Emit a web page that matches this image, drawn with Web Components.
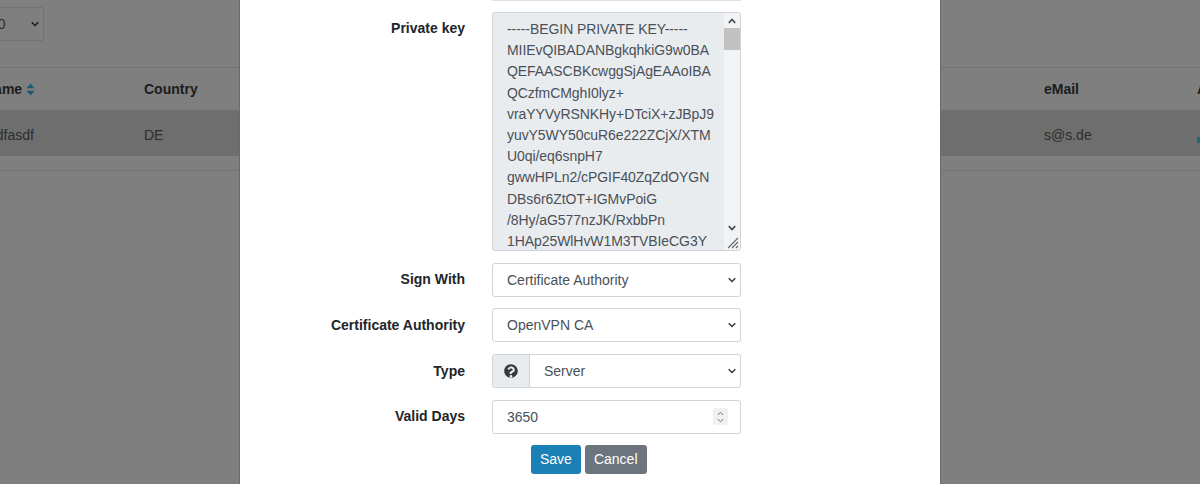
<!DOCTYPE html>
<html>
<head>
<meta charset="utf-8">
<title>Certificates</title>
<style>
  html, body { margin: 0; height: 484px; overflow: hidden; }
  body { font: 14px "Liberation Sans", Arial, sans-serif; color: #212529; position: relative; }
</style>
</head>
<body>
<cert-table>
  <cert-cell slot="head" style="--w:160px"><b>Name</b><sort-icon></sort-icon></cert-cell>
  <cert-cell slot="head" style="--w:900px"><b>Country</b></cert-cell>
  <cert-cell slot="head" style="--w:153px"><b>eMail</b></cert-cell>
  <cert-cell slot="head" style="--w:60px"><b>Action</b></cert-cell>
  <cert-cell slot="row" style="--w:163px;margin-left:-3px">asdfasdf</cert-cell>
  <cert-cell slot="row" style="--w:900px">DE</cert-cell>
  <cert-cell slot="row" style="--w:153px">s@s.de</cert-cell>
  <cert-cell slot="row" style="--w:60px"><i class="mark"></i></cert-cell>
</cert-table>
<cert-modal>
  <form-row label="Private key" top><key-area></key-area></form-row>
  <form-row label="Sign With"><form-select>Certificate Authority</form-select></form-row>
  <form-row label="Certificate Authority"><form-select>OpenVPN CA</form-select></form-row>
  <form-row label="Type"><form-select help>Server</form-select></form-row>
  <form-row label="Valid Days"><number-box>3650</number-box></form-row>
  <div slot="actions" style="display:flex;gap:4px">
    <form-btn kind="save">Save</form-btn>
    <form-btn kind="cancel">Cancel</form-btn>
  </div>
</cert-modal>
<script>
const CHEVRON = `<svg width="8" height="6" viewBox="0 0 8 6"><path d="M.7 1.2L4 4.5l3.3-3.3" fill="none" stroke="#343a40" stroke-width="1.5"/></svg>`

class CertCell extends HTMLElement {
  constructor() {
    super()
    this.attachShadow({ mode: 'open' }).innerHTML = `<style>
      :host { display: flex; align-items: center; gap: 4px; flex: 0 0 var(--w); min-width: 0; }
      ::slotted(.mark) { width: 6px; height: 6px; margin-top: 10px; background: #1f6a70; }
    </style><slot></slot>`
  }
}

class SortIcon extends HTMLElement {
  constructor() {
    super()
    this.attachShadow({ mode: 'open' }).innerHTML = `<style>
      :host { display: inline-flex; }
    </style><svg width="9" height="13" viewBox="0 0 9 13"><path d="M4.5 0.5L8.5 5.2H.5zM4.5 12.5L.5 7.8H8.5z" fill="#1d5a74"/></svg>`
  }
}

class CertTable extends HTMLElement {
  constructor() {
    super()
    this.attachShadow({ mode: 'open' }).innerHTML = `<style>
      :host { display: block; height: 484px; background: #7f7f7f; color: #1c1c1c; overflow: hidden; }
      .tools { height: 67px; box-sizing: border-box; padding-top: 7px; }
      .len { width: 66px; height: 34px; margin-left: -22px; box-sizing: border-box; border: 1px solid #737373; border-radius: 2px;
        display: flex; align-items: center; justify-content: space-between; padding: 0 4px 0 11px; color: #2d2d2d; }
      .head, .row { display: flex; margin-left: -16px; width: 1300px; align-items: center; box-sizing: border-box; }
      .head { height: 43px; border-top: 1px solid #737373; }
      .row { height: 46px; background: #6e6e6e; color: #2d2d2d; padding-top: 3px; }
      .gap { height: 14px; border-bottom: 1px solid #737373; }
      svg path { stroke: #1c1c1c; }
    </style>
    <div class="tools"><div class="len">10 ${CHEVRON}</div></div>
    <div class="head"><slot name="head"></slot></div>
    <div class="row"><slot name="row"></slot></div>
    <div class="gap"></div>`
  }
}

class CertModal extends HTMLElement {
  constructor() {
    super()
    this.attachShadow({ mode: 'open' }).innerHTML = `<style>
      :host { position: absolute; top: 0; left: 240px; width: 700px; height: 484px; background: #fff; overflow: hidden;
        box-sizing: border-box; display: flex; flex-direction: column; align-items: stretch; box-shadow: 0 0 0 1px #6a6a6a; }
      .cut { margin-left: 252px; width: 249px; height: 1px; background: #dee2e6; margin-bottom: 11px; }
      .rows { display: flex; flex-direction: column; gap: 11.7px; }
      .actions { display: flex; margin: 11px 0 0 291px; }
    </style>
    <div class="cut"></div>
    <div class="rows"><slot></slot></div>
    <div class="actions"><slot name="actions"></slot></div>`
  }
}

class FormRow extends HTMLElement {
  constructor() {
    super()
    this.attachShadow({ mode: 'open' }).innerHTML = `<style>
      :host { display: grid; grid-template-columns: 225px 249px; column-gap: 27px; align-items: center; }
      :host([top]) { align-items: start; }
      :host([top]) label { padding-top: 6px; }
      label { font-weight: 700; text-align: right; color: #212529; line-height: 21px; }
    </style><label></label><div><slot></slot></div>`
  }
  connectedCallback() {
    this.shadowRoot.querySelector('label').textContent = this.getAttribute('label')
  }
}

class FormSelect extends HTMLElement {
  constructor() {
    super()
    const help = this.hasAttribute('help')
    this.attachShadow({ mode: 'open' }).innerHTML = `<style>
      :host { display: flex; height: 34px; box-sizing: border-box; border: 1px solid #ced4da; border-radius: 3px; background: #fff; color: #495057; overflow: hidden; }
      .help { width: 36px; flex: none; background: #e9ecef; border-right: 1px solid #ced4da; display: flex; align-items: center; justify-content: center; }
      .val { flex: 1; display: flex; align-items: center; justify-content: space-between; padding: 0 4px 0 14px; }
    </style>
    ${help ? `<span class="help"><svg width="14" height="14" viewBox="0 0 512 512"><path fill="#343a40" d="M504 256c0 137-111 248-248 248S8 393 8 256C8 119 119 8 256 8s248 111 248 248zM263 90c-54 0-89 23-134 79-4 5-3 12 2 16l34 26c5 4 13 3 17-2 24-30 40-47 76-47 27 0 61 17 61 44 0 20-16 30-43 45-31 17-73 39-73 94v5c0 7 5 12 12 12h56c7 0 12-5 12-12v-1c0-38 110-39 110-141 0-77-80-123-153-123zM256 398c-29 0-52 23-52 52s23 52 52 52 52-23 52-52-23-52-52-52z"/></svg></span>` : ''}
    <div class="val"><span><slot></slot></span>${CHEVRON}</div>`
  }
}

class KeyArea extends HTMLElement {
  constructor() {
    super()
    const lines = ['-----BEGIN PRIVATE KEY-----', 'MIIEvQIBADANBgkqhkiG9w0BA', 'QEFAASCBKcwggSjAgEAAoIBA', 'QCzfmCMghI0lyz+', 'vraYYVyRSNKHy+DTciX+zJBpJ9', 'yuvY5WY50cuR6e222ZCjX/XTM', 'U0qi/eq6snpH7', 'gwwHPLn2/cPGIF40ZqZdOYGN', 'DBs6r6ZtOT+IGMvPoiG', '/8Hy/aG577nzJK/RxbbPn', '1HAp25WlHvW1M3TVBIeCG3Y']
    this.attachShadow({ mode: 'open' }).innerHTML = `<style>
      :host { display: flex; height: 239px; box-sizing: border-box; border: 1px solid #ced4da; border-radius: 3px; background: #e9ecef; color: #495057; overflow: hidden; position: relative; }
      .text { flex: 1; padding: 6px 0 0 14px; line-height: 21.2px; letter-spacing: -0.07px; white-space: pre; overflow: hidden; }
      .bar { flex: 0 0 16px; display: flex; flex-direction: column; align-items: center; background: #f1f3f5; }
      .arrow { height: 15px; display: flex; align-items: center; justify-content: center; flex: none; }
      .thumb { width: 16px; height: 22px; background: #c1c1c1; flex: none; }
      .rest { flex: 1; }
      .grip { position: absolute; right: 1px; bottom: 1px; }
    </style>
    <div class="text">${lines.join('\n')}</div>
    <div class="bar">
      <div class="arrow"><svg width="8" height="6" viewBox="0 0 8 6"><path d="M.8 4.8L4 1.4l3.2 3.4" fill="none" stroke="#4a4a4a" stroke-width="1.7"/></svg></div>
      <div class="thumb"></div><div class="rest"></div>
      <div class="arrow" style="margin-bottom:15px"><svg width="8" height="6" viewBox="0 0 8 6"><path d="M.8 1.2L4 4.6l3.2-3.4" fill="none" stroke="#4a4a4a" stroke-width="1.7"/></svg></div>
    </div>
    <svg class="grip" width="13" height="13" viewBox="0 0 13 13"><path d="M12 2L2 12M12 6l-6 6M12 10l-2 2" stroke="#666" stroke-width="1.1" fill="none"/></svg>`
  }
}

class NumberBox extends HTMLElement {
  constructor() {
    super()
    this.attachShadow({ mode: 'open' }).innerHTML = `<style>
      :host { display: flex; height: 34px; box-sizing: border-box; border: 1px solid #ced4da; border-radius: 3px; background: #fff; color: #495057; align-items: center; justify-content: space-between; padding: 0 12px 0 14px; }
      .spin { width: 15px; height: 17px; background: #eef0f2; border-radius: 2px; display: flex; flex-direction: column; align-items: center; justify-content: center; gap: 2px; }
    </style>
    <span><slot></slot></span>
    <div class="spin">
      <svg width="7" height="5" viewBox="0 0 7 5"><path d="M.8 4L3.5 1.2 6.2 4" fill="none" stroke="#777" stroke-width="1"/></svg>
      <svg width="7" height="5" viewBox="0 0 7 5"><path d="M.8 1L3.5 3.8 6.2 1" fill="none" stroke="#777" stroke-width="1"/></svg>
    </div>`
  }
}

class FormBtn extends HTMLElement {
  constructor() {
    super()
    this.attachShadow({ mode: 'open' }).innerHTML = `<style>
      :host { display: inline-flex; height: 29px; box-sizing: border-box; align-items: center; padding: 0 9px; border-radius: 3px; color: #fff; background: #6c757d; }
      :host([kind=save]) { background: #1a80b6; }
    </style><slot></slot>`
  }
}

customElements.define('cert-cell', CertCell)
customElements.define('sort-icon', SortIcon)
customElements.define('cert-table', CertTable)
customElements.define('cert-modal', CertModal)
customElements.define('form-row', FormRow)
customElements.define('form-select', FormSelect)
customElements.define('key-area', KeyArea)
customElements.define('number-box', NumberBox)
customElements.define('form-btn', FormBtn)
</script>
</body>
</html>
